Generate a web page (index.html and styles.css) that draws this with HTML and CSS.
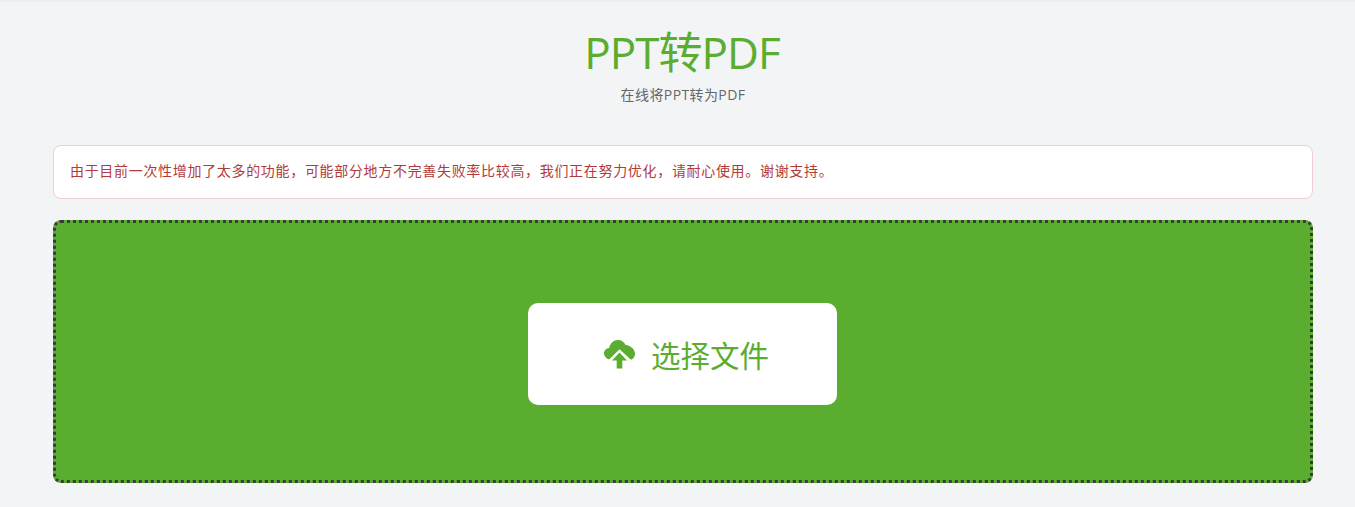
FILE: index.html
```html
<!DOCTYPE html>
<html lang="zh-CN">
<head>
<meta charset="utf-8">
<title>PPT转PDF</title>
<link rel="stylesheet" href="styles.css">
</head>
<body>
<div class="topline"></div>
<main class="page">
  <header class="head">
    <h1 class="title">PPT转PDF</h1>
    <p class="subtitle">在线将PPT转为PDF</p>
  </header>
  <div class="alert">由于目前一次性增加了太多的功能，可能部分地方不完善失败率比较高，我们正在努力优化，请耐心使用。谢谢支持。</div>
  <section class="drop">
    <button class="pick" type="button">
      <svg class="icon" viewBox="0 0 31 29" aria-hidden="true"><path d="M5 19.500C2 18.500 0 16 0 13.500 0 10.500 2.300 8.200 5.200 8 6 3.500 9.600 0 14 0c3.500 0 6.300 2 7.600 5C27 5.500 31 9.500 31 14c0 2.500-1.500 4.700-4 5.800L15.500 9.300z"/><path d="M15.500 12.500L8 20.500h4.700V28.500h5.600V20.500H23z"/></svg>
      <span>选择文件</span>
    </button>
  </section>
</main>
</body>
</html>
```
FILE: styles.css
```css
* { box-sizing: border-box; }
html, body { margin: 0; padding: 0; }
body {
  background: #f3f4f6;
  font-family: "Open Sans", "Noto Sans CJK SC", sans-serif;
  height: 507px;
  overflow: hidden;
}
.topline { height: 2px; background: #eeeff1; }
.page { width: 1260px; margin: 0 42px 0 53px; }
.head { text-align: center; padding-top: 22px; height: 143px; }
.title {
  margin: 0;
  padding-right: 2px;
  font-size: 44px;
  line-height: 56px;
  font-weight: 400;
  letter-spacing: -1px;
  color: #5aad2e;
}
.subtitle {
  margin: 5px 0 0;
  font-size: 14px;
  line-height: 20px;
  letter-spacing: 0.4px;
  color: #666;
}
.alert {
  height: 54px;
  padding: 0 16px 5px;
  display: flex;
  align-items: center;
  background: #fff;
  border: 1px solid #f1ccd5;
  border-radius: 8px;
  font-size: 14px;
  letter-spacing: 0.68px;
  color: #b23a3a;
}
.drop {
  margin-top: 21px;
  height: 263px;
  padding: 5px 1px 0 0;
  background: #5aad2e;
  border: 3px dotted #3a3a3a;
  border-radius: 8px;
  display: flex;
  align-items: center;
  justify-content: center;
}
.pick {
  width: 309px;
  height: 102px;
  border: 0;
  border-radius: 10px;
  background: #fff;
  color: #5aad2e;
  font-family: inherit;
  font-size: 29.5px;
  display: flex;
  align-items: center;
  justify-content: center;
  gap: 16px;
  padding: 0 0 0 8px;
}
.icon { width: 31px; height: 29px; fill: currentColor; display: block; }
```
